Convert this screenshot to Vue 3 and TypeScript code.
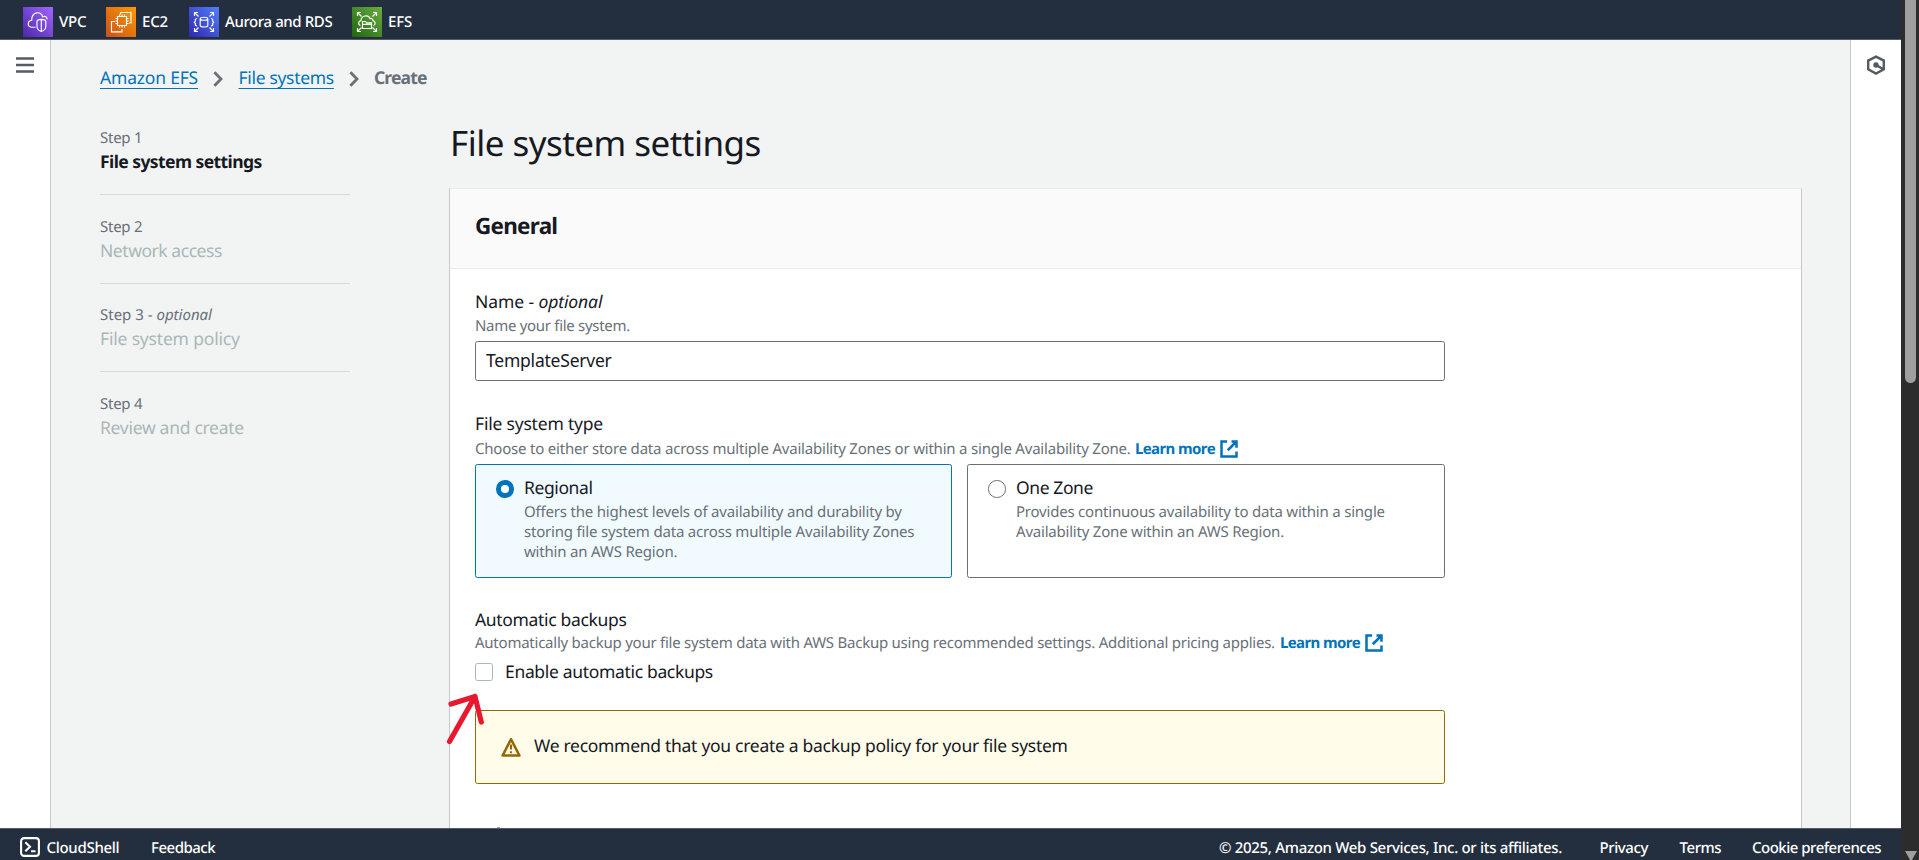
<script setup lang="ts">
import { ref } from 'vue'

interface Step {
  id: number
  label: string
  optional?: boolean
  title: string
  key: string
}

const steps: Step[] = [
  { id: 1, label: 'Step 1', title: 'File system settings', key: 'settings' },
  { id: 2, label: 'Step 2', title: 'Network access', key: 'network' },
  { id: 3, label: 'Step 3', optional: true, title: 'File system policy', key: 'policy' },
  { id: 4, label: 'Step 4', title: 'Review and create', key: 'review' },
]

const activeStep = ref(1)
const name = ref('TemplateServer')
const storageType = ref<'regional' | 'onezone'>('regional')
const backups = ref(false)
</script>

<template>
  <div class="screen">
    <div class="console">
      <nav class="topnav">
        <a class="service">
          <svg class="tile tile-vpc" viewBox="0 0 30 30">
            <path d="M12.500 20.200H8.500C4 19.500 4.200 14 8.700 13.200C8.500 4.500 18.500 3.500 19.700 9.800C22.300 8.400 24 10 24.200 12.200" />
            <path d="M18.300 12.300Q22.800 12.300 22.800 14.500V19.500Q22.800 23 18.300 24.500Q14 23 14 19.500V14.500Q14 12.300 18.300 12.300ZM18.300 12.500V24.500" />
          </svg>
          <span class="vpc">VPC</span>
        </a>
        <a class="service">
          <svg class="tile tile-ec2" viewBox="0 0 30 30">
            <path d="M14.500 7.500V5.500H25V16H23M9 14.500H5.500V24.800H16V22" />
            <path d="M11.500 9.500H20.500V18.500H11.500ZM13.500 9.500V7.500M16 9.500V7.500M18.500 9.500V7.500M13.500 20.500V18.500M16 20.500V18.500M18.500 20.500V18.500M11.500 11.500H9.500M11.500 14H9.500M11.500 16.500H9.500M20.500 11.500H22.500M20.500 14H22.500M20.500 16.500H22.500" />
          </svg>
          <span class="ec2">EC2</span>
        </a>
        <a class="service">
          <svg class="tile tile-rds" viewBox="0 0 30 30">
            <path d="M5.500 9V5.500H9M5.500 5.500L9.500 9.500M21 5.500H24.500V9M24.500 5.500L20.500 9.500M5.500 21V24.500H9M5.500 24.500L9.500 20.500M21 24.500H24.500V21M24.500 24.500L20.500 20.500" />
            <path d="M11.200 11.700C11.200 9.700 18.800 9.700 18.800 11.700V18.500C18.800 20.500 11.200 20.500 11.200 18.500ZM11.200 11.700C11.200 13.700 18.800 13.700 18.800 11.700" />
            <path d="M8 11.500Q5.500 12 6.500 14L5.300 15.200L6.500 16.500Q5.500 18.500 8 19M22 11.500Q24.500 12 23.500 14L24.700 15.200L23.500 16.500Q24.500 18.500 22 19" />
          </svg>
          <span class="rds">Aurora and RDS</span>
        </a>
        <a class="service">
          <svg class="tile tile-efs" viewBox="0 0 30 30">
            <path d="M5.500 9V5.500H9M5.500 5.500L9.500 9.500M21 5.500H24.500V9M24.500 5.500L20.500 9.500M5.500 21V24.500H9M5.500 24.500L9.500 20.500M21 24.500H24.500V21M24.500 24.500L20.500 20.500" />
            <path d="M8.500 18.500C5.500 17.500 6.500 14 9 13.600C9 8.500 16.500 7 18 11.600C20 11 21 12.200 21 13.600C23.500 14.200 24 17.500 21.500 18.500" />
            <path d="M10.500 21.500V14.500H13.500L14.500 15.800H19.500V21.500ZM10.500 17.300H19.500" />
          </svg>
          <span>EFS</span>
        </a>
      </nav>

      <div class="body">
        <aside class="rail rail-left">
          <svg class="burger" viewBox="0 0 18 16"><path d="M0 1.500H18M0 8H18M0 14.500H18" /></svg>
        </aside>

        <main class="content">
          <nav class="crumbs">
            <a class="crumb-root">Amazon EFS</a>
            <svg class="chev" viewBox="0 0 10 16"><path d="M1.400 1.200L8 8L1.400 14.800" /></svg>
            <a class="crumb-fs">File systems</a>
            <svg class="chev" viewBox="0 0 10 16"><path d="M1.400 1.200L8 8L1.400 14.800" /></svg>
            <b>Create</b>
          </nav>

          <div class="wizard">
            <ol class="steps">
              <li v-for="s in steps" :key="s.id">
                <div class="step-label" :class="{ loose: s.optional }">{{ s.label }}<template v-if="s.optional"> - <i>optional</i></template></div>
                <div class="step-title" :class="[s.key, { active: s.id === activeStep }]">{{ s.title }}</div>
              </li>
            </ol>

            <section class="form">
              <h1>File system settings</h1>
              <div class="panel">
                <header class="panel-head"><h2>General</h2></header>
                <div class="fields">
                  <div class="field">
                    <div class="label name-label">Name - <i>optional</i></div>
                    <div class="hint name-hint">Name your file system.</div>
                    <input v-model="name" class="text-input" type="text" />
                  </div>

                  <div class="field type-field">
                    <div class="label type-label">File system type</div>
                    <div class="hint">
                      <span>Choose to either store data across multiple Availability Zones or within a single Availability Zone.</span>
                      <a class="learn">Learn more</a>
                      <svg class="ext" viewBox="0 0 16 16"><path d="M10 2H14V7M7 9L14 2M14 10V14H2V2H6.500" /></svg>
                    </div>
                    <div class="cards">
                      <div class="card" :class="{ selected: storageType === 'regional' }" @click="storageType = 'regional'">
                        <span class="radio"></span>
                        <div>
                          <div class="card-title">Regional</div>
                          <p class="d1">Offers the highest levels of availability and durability by<br />storing file system data across multiple Availability Zones<br />within an AWS Region.</p>
                        </div>
                      </div>
                      <div class="card" :class="{ selected: storageType === 'onezone' }" @click="storageType = 'onezone'">
                        <span class="radio"></span>
                        <div>
                          <div class="card-title">One Zone</div>
                          <p class="d2">Provides continuous availability to data within a single<br />Availability Zone within an AWS Region.</p>
                        </div>
                      </div>
                    </div>
                  </div>

                  <div class="field backup-field">
                    <div class="label">Automatic backups</div>
                    <div class="hint backup-hint">
                      <span>Automatically backup your file system data with AWS Backup using recommended settings. Additional pricing applies.</span>
                      <a class="learn">Learn more</a>
                      <svg class="ext" viewBox="0 0 16 16"><path d="M10 2H14V7M7 9L14 2M14 10V14H2V2H6.500" /></svg>
                    </div>
                    <div class="check-row" @click="backups = !backups">
                      <span class="check" :class="{ on: backups }"></span>
                      <span class="check-text">Enable automatic backups</span>
                      <svg class="pointer" viewBox="0 0 40 56"><path d="M4.500 49.500L30 4.500M6 12L30 4.500L36.300 30" /></svg>
                    </div>
                  </div>

                  <div class="alert">
                    <svg viewBox="0 0 16 16">
                      <path class="tri" d="M8 1.800L14.700 14.800H1.300Z" />
                      <path class="mark" d="M8 6V10M8 11.300V13" />
                    </svg>
                    <span>We recommend that you create a backup policy for your file system</span>
                  </div>
                  <div class="next-field"></div>
                </div>
              </div>
            </section>
          </div>
        </main>

        <aside class="rail rail-right">
          <svg class="hex" viewBox="0 0 20 20">
            <path d="M10 1.600L17.800 5.600V14.400L10 18.600L2.200 14.400V5.600ZM10 10L17 14" />
            <circle cx="10" cy="10" r="2.700" />
          </svg>
        </aside>
      </div>

      <footer class="footer">
        <svg class="shell" viewBox="0 0 20 20">
          <rect x="1.100" y="1.100" width="17.800" height="17.800" rx="3" />
          <path d="M5.300 5.300L10 9.800L5.300 14.300M11 14.300H15.500" />
        </svg>
        <span class="f-shell">CloudShell</span>
        <span class="f-feedback">Feedback</span>
        <span class="f-copy">© 2025, Amazon Web Services, Inc. or its affiliates.</span>
        <span class="f-privacy">Privacy</span>
        <span class="f-terms">Terms</span>
        <span class="f-cookie">Cookie preferences</span>
      </footer>
    </div>

    <div class="scrollbar">
      <div class="thumb"></div>
      <div class="down"></div>
    </div>
  </div>
</template>

<style>
html,
body {
  margin: 0;
  overflow: hidden;
}
</style>

<style scoped>
.screen {
  display: flex;
  width: 1919px;
  height: 860px;
  overflow: hidden;
  font-family: "Noto Sans", "Open Sans", sans-serif;
  font-size: 17.5px;
  letter-spacing: -0.3px;
  color: #16191f;
  background: #fff;
  text-rendering: geometricPrecision;
}
.screen * {
  box-sizing: border-box;
}
svg {
  display: block;
  flex: none;
  fill: none;
}
span,
a {
  white-space: nowrap;
}
.console {
  width: 1901px;
  display: grid;
  grid-template-rows: 40px 788px 32px;
}
.topnav {
  display: flex;
  align-items: flex-start;
  gap: 20px;
  padding: 7px 0 0 23px;
  background: #232f3e;
  border-bottom: 1px solid #545b64;
}
.service {
  display: flex;
  align-items: center;
  gap: 6px;
  height: 30px;
  color: #fff;
  font-size: 15px;
  font-weight: 500;
  line-height: 30px;
  letter-spacing: -0.2px;
}
.service span {
  height: 30px;
}
.vpc,
.ec2 {
  width: 27px;
}
.rds {
  width: 107px;
  letter-spacing: -0.4px;
}
.tile {
  width: 30px;
  height: 30px;
  stroke: #fff;
  stroke-width: 1.15;
}
.tile-vpc { background: linear-gradient(45deg, #4d27a8, #a166ff); }
.tile-ec2 { background: linear-gradient(45deg, #c8511b, #ff9900); }
.tile-rds { background: linear-gradient(45deg, #2e27ad, #527fff); }
.tile-efs { background: linear-gradient(45deg, #1b660f, #6cae3e); }

.body {
  display: flex;
  overflow: hidden;
}
.rail {
  width: 50px;
  flex: none;
  background: #fff;
}
.rail-right {
  width: 51px;
}
.burger {
  width: 18px;
  height: 16px;
  margin: 17px 0 0 16px;
  stroke: #545b64;
  stroke-width: 2.5;
}
.hex {
  width: 20px;
  height: 20px;
  margin: 15px 0 0 15px;
  stroke: #545b64;
  stroke-width: 2.4;
}
.hex circle {
  fill: #545b64;
  stroke: none;
}
.content {
  flex: 1;
  background: #f2f3f3;
  border-left: 1px solid #c3c9ca;
  border-right: 1px solid #c3c9ca;
  padding: 24px 48px 0 49px;
}
.crumbs {
  display: flex;
  align-items: center;
  height: 28px;
  line-height: 28px;
}
.crumbs a {
  color: #0073bb;
  text-decoration: underline;
  text-decoration-thickness: 1px;
  text-underline-offset: 4px;
  text-decoration-skip-ink: none;
}
.crumb-root { width: 98px; letter-spacing: -0.2px; }
.crumb-fs { width: 95px; letter-spacing: -0.32px; }
.crumbs b {
  color: #687078;
  letter-spacing: -0.86px;
}
.chev {
  width: 10px;
  height: 16px;
  margin: 2px 15.5px 0 15px;
  stroke: #687078;
  stroke-width: 2.8;
}
.wizard {
  display: grid;
  grid-template-columns: 250px 1353px;
  column-gap: 99px;
}
.steps {
  list-style: none;
  margin: 14.200px 0 0;
  padding: 0;
}
.steps li {
  padding: 21.700px 0 19px;
  border-bottom: 1px solid #d5dbdb;
}
.steps li:last-child {
  border-bottom: 0;
}
.step-label {
  font-size: 15px;
  line-height: 20px;
  letter-spacing: -0.25px;
  color: #687078;
}
.step-label.loose {
  letter-spacing: 0;
}
.step-title {
  margin-top: 2px;
  line-height: 25px;
  color: #aab7b8;
}
.step-title.active {
  font-weight: 700;
  color: #16191f;
}
.settings { letter-spacing: -0.57px; }
.network { letter-spacing: -0.45px; }
.policy { letter-spacing: -0.18px; }
.review { letter-spacing: -0.29px; }

h1 {
  margin: 30px 0 22px 1px;
  font-size: 35px;
  font-weight: 400;
  line-height: 44px;
  letter-spacing: -0.53px;
}
.panel {
  height: 660px;
  background: #fff;
  border: 1px solid #c3c9ca;
  border-top-color: #eaeded;
}
.panel-head {
  height: 80px;
  padding: 23px 25px 0;
  background: #fafafa;
  border-bottom: 1px solid #eaeded;
}
h2 {
  margin: 0;
  font-size: 22.5px;
  line-height: 28px;
  letter-spacing: -0.75px;
}
.fields {
  width: 995px;
  padding: 20px 0 0 25px;
}
.label {
  line-height: 26px;
  letter-spacing: -0.33px;
}
.name-label,
.name-label i {
  letter-spacing: -0.1px;
}
.hint {
  display: flex;
  font-size: 15px;
  line-height: 20px;
  letter-spacing: -0.205px;
  color: #687078;
}
.name-hint {
  margin-top: 1px;
  letter-spacing: -0.3px;
}
.text-input {
  display: block;
  width: 970px;
  height: 40px;
  margin-top: 5px;
  padding: 0 10px 2px;
  border: 1px solid #687078;
  border-radius: 2.5px;
  background: #fff;
  color: #16191f;
  font: inherit;
  letter-spacing: -0.22px;
  outline: none;
}
.type-field {
  margin-top: 30px;
}
.type-label {
  letter-spacing: -0.2px;
}
.type-field .hint {
  margin-top: 1.500px;
}
.hint a {
  margin-left: auto;
  color: #0073bb;
  font-weight: 700;
  letter-spacing: -0.6px;
}
.type-field .hint {
  width: 764px;
}
.backup-field .hint {
  width: 909px;
}
.ext {
  width: 20px;
  height: 20px;
  margin-left: 4px;
  stroke: #0073bb;
  stroke-width: 2;
}
.cards {
  display: grid;
  grid-template-columns: 477px 478px;
  gap: 15px;
  margin-top: 5.500px;
}
.card {
  display: flex;
  height: 114px;
  padding: 10px 20px;
  border: 1px solid #687078;
  border-radius: 2.5px;
  background: #fff;
}
.card.selected {
  background: #f1faff;
  border-color: #0073bb;
}
.radio {
  flex: none;
  width: 17.5px;
  height: 17.5px;
  margin: 5px 10.5px 0 0;
  border: 1.3px solid #687078;
  border-radius: 50%;
  background: #fff;
}
.selected .radio {
  border: 5.5px solid #0073bb;
}
.card-title {
  line-height: 26px;
  letter-spacing: -0.4px;
}
.card p {
  margin: 1px 0 0;
  font-size: 15px;
  line-height: 20px;
  color: #687078;
  white-space: nowrap;
}
.d1 { letter-spacing: -0.19px; }
.d2 { letter-spacing: -0.21px; }

.backup-field {
  margin-top: 29px;
}
.backup-field .backup-hint {
  letter-spacing: -0.242px;
}
.check-row {
  position: relative;
  display: flex;
  margin-top: 6px;
  height: 26px;
  line-height: 26px;
}
.check {
  width: 17.5px;
  height: 17.5px;
  margin: 4px 12.5px 0 0;
  border: 1.3px solid #aab7b8;
  border-radius: 2.5px;
}
.check.on {
  background: #0073bb;
}
.check-text {
  letter-spacing: -0.33px;
}
.pointer {
  position: absolute;
  left: -30px;
  top: 33px;
  width: 40px;
  height: 56px;
  stroke: #e8192e;
  stroke-width: 5.2;
  stroke-linecap: round;
  stroke-linejoin: round;
}
.alert {
  display: flex;
  height: 74px;
  margin-top: 25px;
  padding: 22px 25px 0;
  border: 1px solid #906806;
  border-radius: 2.5px;
  background: #fffce9;
  line-height: 27px;
  letter-spacing: -0.29px;
}
.alert svg {
  width: 20px;
  height: 20px;
  margin: 4px 13px 0 0;
}
.alert path {
  stroke: #906806;
  stroke-width: 2.1;
  stroke-linejoin: round;
}
.alert .mark {
  stroke-width: 1.7;
}
.next-field {
  width: 3px;
  height: 1px;
  margin: 43px 0 0 22px;
  background: #a5a8aa;
}

.footer {
  display: flex;
  align-items: flex-start;
  padding: 8px 20px 0;
  border-top: 1px solid #545b64;
  background: #232f3e;
  color: #fff;
  font-size: 15px;
  font-weight: 500;
  line-height: 22px;
}
.shell {
  width: 20px;
  height: 20px;
  margin-right: 6.5px;
  stroke: #fff;
  stroke-width: 2.1;
}
.footer span {
  height: 20px;
}
.f-shell { width: 104.5px; }
.f-feedback { letter-spacing: -0.5px; }
.f-copy { margin-left: auto; width: 343px; letter-spacing: -0.31px; }
.f-privacy { margin-left: 37.5px; width: 48px; letter-spacing: -0.42px; }
.f-terms { margin-left: 32px; width: 41px; letter-spacing: -0.42px; }
.f-cookie { margin-left: 31.5px; width: 129px; letter-spacing: -0.5px; }

.scrollbar {
  display: flex;
  flex-direction: column;
  justify-content: space-between;
  align-items: flex-start;
  width: 18px;
  padding-left: 4px;
  background: #2c2c2c;
}
.thumb {
  width: 11px;
  height: 383px;
  border-radius: 0 0 5.5px 5.5px;
  background: #9f9f9f;
}
.down {
  width: 12px;
  height: 9px;
  background: #9f9f9f;
  clip-path: polygon(0 0, 100% 0, 58% 100%, 42% 100%);
}
</style>
